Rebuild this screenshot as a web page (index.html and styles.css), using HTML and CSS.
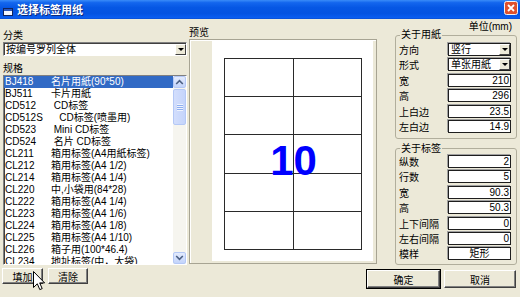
FILE: index.html
```html
<!DOCTYPE html>
<html lang="zh-CN">
<head>
    <meta charset="UTF-8">
    <title>选择标签用纸</title>
    <link rel="stylesheet" href="styles.css">
</head>
<body>
<div class="window">
    <div class="titlebar">
        <svg class="appicon" width="10" height="8" viewBox="0 0 10 8">
            <rect x="0.5" y="0.5" width="9" height="7" fill="#f4f7ff" stroke="#13235a"/>
            <rect x="1" y="1" width="8" height="2" fill="#2b55b8"/>
        </svg>
        <span class="title">选择标签用纸</span>
        <span class="close">
            <svg width="14" height="14" viewBox="0 0 14 14">
                <rect x="0.5" y="0.5" width="13" height="13" rx="2" fill="#e0512c" stroke="#f3f3f3"/>
                <path d="M4 4 L10 10 M10 4 L4 10" stroke="#fff" stroke-width="1.8"/>
            </svg>
        </span>
    </div>
    <div class="client">
        <div class="left">
            <div class="label">分类</div>
            <div class="combo">
                <span class="combo-text">按编号罗列全体</span>
                <span class="dropbtn"></span>
            </div>
            <div class="label gap">规格</div>
            <div class="listbox">
                <ul class="items">
                    <li class="selected"><span class="code">BJ418</span>名片用紙(90*50)</li>
                    <li><span class="code">BJ511</span>卡片用紙</li>
                    <li><span class="code">CD512</span> CD标签</li>
                    <li><span class="code">CD512S</span>   CD标签(喷墨用)</li>
                    <li><span class="code">CD523</span> Mini CD标签</li>
                    <li><span class="code">CD524</span> 名片 CD标签</li>
                    <li><span class="code">CL211</span>箱用标签(A4用紙标签)</li>
                    <li><span class="code">CL212</span>箱用标签(A4 1/2)</li>
                    <li><span class="code">CL214</span>箱用标签(A4 1/4)</li>
                    <li><span class="code">CL220</span>中,小袋用(84*28)</li>
                    <li><span class="code">CL222</span>箱用标签(A4 1/4)</li>
                    <li><span class="code">CL223</span>箱用标签(A4 1/6)</li>
                    <li><span class="code">CL224</span>箱用标签(A4 1/8)</li>
                    <li><span class="code">CL225</span>箱用标签(A4 1/10)</li>
                    <li><span class="code">CL226</span>箱子用(100*46.4)</li>
                    <li><span class="code">CL234</span>地址标签(中，大袋)</li>
                </ul>
                <div class="vscroll">
                    <div class="sbtn">
                        <svg width="9" height="6" viewBox="0 0 9 6"><path d="M1.2 5 L4.5 1.7 L7.8 5" fill="none" stroke="#4d6185" stroke-width="1.6"/></svg>
                    </div>
                    <div class="thumb"><span class="grip"></span></div>
                    <div class="track"></div>
                    <div class="sbtn">
                        <svg width="9" height="6" viewBox="0 0 9 6"><path d="M1.2 1 L4.5 4.3 L7.8 1" fill="none" stroke="#4d6185" stroke-width="1.6"/></svg>
                    </div>
                </div>
            </div>
        </div>

        <div class="middle">
            <div class="label">预览</div>
            <div class="preview">
                <div class="page">
                    <div class="sheet">
                        <div></div><div></div>
                        <div></div><div></div>
                        <div></div><div></div>
                        <div></div><div></div>
                        <div></div><div></div>
                        <div class="count">10</div>
                    </div>
                </div>
            </div>
        </div>

        <div class="right">
            <div class="unit">单位(mm)</div>
            <fieldset class="group first">
                <legend>关于用紙</legend>
                <div class="rows">
                    <div class="row"><span class="key">方向</span><div class="field select"><span class="val">竖行</span><span class="dropbtn"></span></div></div>
                    <div class="row"><span class="key">形式</span><div class="field select"><span class="val">单张用紙</span><span class="dropbtn"></span></div></div>
                    <div class="row"><span class="key">宽</span><div class="field num">210</div></div>
                    <div class="row"><span class="key">高</span><div class="field num">296</div></div>
                    <div class="row"><span class="key">上白边</span><div class="field num">23.5</div></div>
                    <div class="row"><span class="key">左白边</span><div class="field num">14.9</div></div>
                </div>
            </fieldset>
            <fieldset class="group second">
                <legend>关于标签</legend>
                <div class="rows">
                    <div class="row"><span class="key">纵数</span><div class="field num">2</div></div>
                    <div class="row"><span class="key">行数</span><div class="field num">5</div></div>
                    <div class="row"><span class="key">宽</span><div class="field num">90.3</div></div>
                    <div class="row"><span class="key">高</span><div class="field num">50.3</div></div>
                    <div class="row"><span class="key">上下间隔</span><div class="field num">0</div></div>
                    <div class="row"><span class="key">左右间隔</span><div class="field num">0</div></div>
                    <div class="row"><span class="key">模样</span><div class="field shape">矩形</div></div>
                </div>
            </fieldset>
        </div>
    </div>

    <div class="footer">
        <div class="actions">
            <button class="small w41">填加</button>
            <button class="small w40">清除</button>
        </div>
        <div class="actions confirm">
            <button class="big default">确定</button>
            <button class="big">取消</button>
        </div>
    </div>

    <svg class="cursor" width="13" height="21" viewBox="0 0 13 21">
        <path d="M0.5 0.5 V16.5 L4.3 12.8 L6.8 18.6 L9.2 17.6 L6.7 11.9 H11.6 Z" fill="#fff" stroke="#000" stroke-width="1" stroke-linejoin="miter"/>
    </svg>
</div>
</body>
</html>
```

FILE: styles.css
```css
*{
    box-sizing: border-box;
}
body{
    margin: 0;
    width: 520px;
    height: 297px;
    overflow: hidden;
    background-color: #ece9d8;
    font-family: "Liberation Sans", "Noto Sans CJK SC", sans-serif;
    font-size: 10px;
    color: #000;
}
.window{
    position: relative;
    width: 520px;
    height: 297px;
}

/* title bar */
.titlebar{
    display: flex;
    align-items: flex-start;
    height: 19px;
    padding: 1px 2px 0 3px;
    background: linear-gradient(to bottom, #3a8cf8 0%, #1366ee 14%, #0657e4 40%, #0453e1 70%, #0a5df0 92%, #0b4fd2 100%);
}
.appicon{
    margin: 7px 4px 0 0;
}
.title{
    flex: 1;
    margin-top: 3px;
    color: #fff;
    font-weight: bold;
    font-size: 11px;
    line-height: 13px;
    text-shadow: 1px 1px #0c2a78;
}
.close{
    display: flex;
}

/* columns */
.client{
    display: flex;
    height: 247px;
    padding: 0 3px;
}
.left{
    width: 184px;
    padding-top: 11px;
}
.middle{
    width: 188px;
    margin-left: 2px;
    padding-top: 8px;
}
.right{
    width: 122px;
    margin-left: 18px;
    padding-top: 3px;
}
.label{
    height: 12px;
    line-height: 12px;
}
.label.gap{
    margin-top: 7px;
}

/* combo */
.combo{
    display: flex;
    height: 14px;
    padding: 1px 0 0 1px;
    background-color: #fff;
    border: 1px solid;
    border-color: #808080 #fff #fff #808080;
    box-shadow: inset 1px 1px #404040;
}
.combo-text{
    flex: 1;
    padding-left: 1px;
    line-height: 11px;
}
.dropbtn{
    display: flex;
    align-items: center;
    justify-content: center;
    width: 11px;
    background-color: #ece9d8;
    border: 1px solid;
    border-color: #fff #404040 #404040 #fff;
}
.dropbtn::after{
    content: "";
    border-left: 3px solid transparent;
    border-right: 3px solid transparent;
    border-top: 3px solid #000;
}

/* list */
.listbox{
    display: flex;
    height: 190px;
    background-color: #fff;
    border: 1px solid;
    border-color: #808080 #fff #fff #808080;
    box-shadow: inset 1px 1px #404040;
    overflow: hidden;
}
.items{
    flex: 1;
    margin: 0;
    padding: 0;
    list-style: none;
    overflow: hidden;
}
.items li{
    height: 12px;
    line-height: 12px;
    padding-left: 1px;
    white-space: pre;
}
.items li.selected{
    background-color: #316ac5;
    color: #fff;
}
.code{
    display: inline-block;
    width: 46px;
}
.vscroll{
    display: flex;
    flex-direction: column;
    width: 13px;
    background-color: #f6f5ef;
}
.sbtn{
    display: flex;
    align-items: center;
    justify-content: center;
    height: 12px;
    background: linear-gradient(to bottom, #e3ebfd, #c3d4fb);
    border: 1px solid #b4c8f6;
    border-radius: 2px;
}
.thumb{
    display: flex;
    align-items: center;
    justify-content: center;
    height: 36px;
    margin-top: 1px;
    background: linear-gradient(to right, #d3defc, #c4d4fb);
    border: 1px solid #b4c8f6;
    border-radius: 2px;
}
.grip{
    width: 6px;
    height: 7px;
    background: repeating-linear-gradient(to bottom, #eef3fe 0, #eef3fe 1px, #8eaef0 1px, #8eaef0 2px);
}
.track{
    flex: 1;
}

/* preview */
.preview{
    height: 225px;
    padding: 1px 0 0 22px;
    border: 1px solid #a7a493;
    box-shadow: inset 1px 1px #fff;
}
.page{
    width: 161px;
    height: 220px;
    padding: 17px 0 0 12px;
    background-color: #fff;
}
.sheet{
    position: relative;
    display: grid;
    grid-template-columns: repeat(2, 1fr);
    grid-template-rows: repeat(5, 1fr);
    width: 138px;
    height: 192px;
    border-top: 1px solid #2a2a2a;
    border-left: 1px solid #2a2a2a;
}
.sheet div{
    border-right: 1px solid #2a2a2a;
    border-bottom: 1px solid #2a2a2a;
}
.sheet .count{
    position: absolute;
    top: 0;
    left: 0;
    right: 0;
    bottom: 0;
    display: flex;
    align-items: center;
    justify-content: center;
    padding-top: 12px;
    border: none;
    color: #0000ff;
    font-size: 42px;
    font-weight: bold;
    line-height: 42px;
}

/* settings */
.unit{
    height: 10px;
    padding-right: 5px;
    line-height: 10px;
    text-align: right;
}
.group{
    min-width: 0;
    margin: 0;
    border: 1px solid #b1ae9c;
    border-radius: 3px;
}
.group.first{
    margin-top: -3px;
    padding: 2px 5px 5px 3px;
}
.group.second{
    margin-top: 4px;
    padding: 0 5px 4px 3px;
}
.group legend{
    margin-left: 1px;
    padding: 0 1px;
    line-height: 12px;
}
.rows{
    display: flex;
    flex-direction: column;
    gap: 2.4px;
}
.row{
    display: flex;
    align-items: center;
    height: 13px;
}
.key{
    width: 49px;
}
.field{
    display: flex;
    width: 63px;
    height: 13px;
    background-color: #fff;
    border: 1px solid #1e1e1e;
    box-shadow: -1px -1px 0 #a0a0a0;
    line-height: 11px;
}
.field.num{
    justify-content: flex-end;
    padding-right: 1px;
}
.field.shape{
    justify-content: center;
}
.field.select .val{
    flex: 1;
    padding-left: 2px;
}

/* buttons */
.footer{
    display: flex;
    justify-content: space-between;
    padding: 2px 4px 0 2px;
}
.actions{
    display: flex;
    gap: 5px;
}
.actions.confirm{
    margin-top: 2px;
    gap: 4px;
}
button{
    padding: 0;
    font: inherit;
    color: #000;
    background-color: #ece9d8;
    border: 1px solid;
    border-color: #fff #404040 #404040 #fff;
    box-shadow: inset -1px -1px #808080;
}
button.small{
    height: 16px;
}
.w41{
    width: 41px;
}
.w40{
    width: 40px;
}
button.big{
    width: 72px;
    height: 18px;
}
button.default{
    width: 73px;
    outline: 1px solid #000;
    outline-offset: 0;
}
.cursor{
    position: absolute;
    left: 33px;
    top: 271px;
}
```
